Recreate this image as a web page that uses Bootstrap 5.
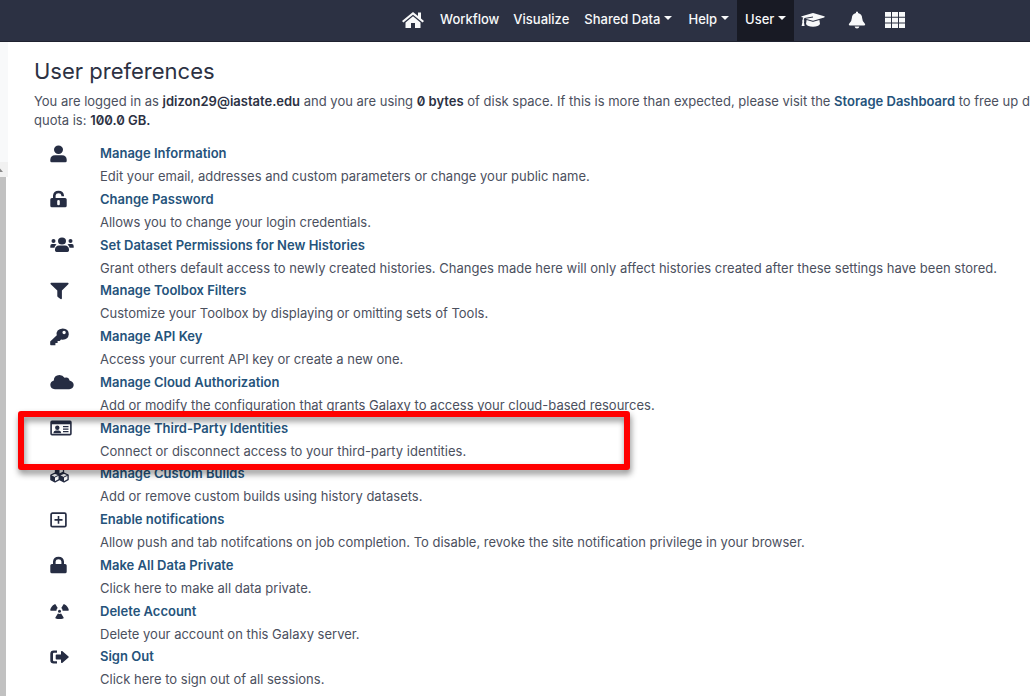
<!DOCTYPE html>
<html lang="en">
<head>
<meta charset="utf-8">
<meta name="viewport" content="width=device-width, initial-scale=1">
<title>User preferences</title>
<link href="https://cdn.jsdelivr.net/npm/bootstrap@5.3.0/dist/css/bootstrap.min.css" rel="stylesheet">
<style>
:root { --masthead: #2c3143; --ink: #2c3143; --link: #25537b; }
body { font-family: Inter, "Liberation Sans", sans-serif; font-size: 13px; line-height: 19px; color: #4b505e; }
a { color: var(--link); text-decoration: none; font-weight: 600; }
svg { display: block; flex: none; fill: currentColor; }
.masthead { background: var(--masthead); height: 42px; border-bottom: 1px solid #1f2230; padding-left: 395px; }
.masthead .nav-link { color: #f8f9fa; font-size: 13px; font-weight: 500; line-height: 19px; padding: 0 7px 2px; white-space: nowrap; }
.masthead .nav-link.active { background: #181a24; }
.masthead .dropdown-toggle::after { margin-left: 4px; border-width: 4px 4px 0; vertical-align: 4px; }
.side-strip { width: 8px; background: #f8f9fa; }
.side-space { height: 120px; }
.side-arrow { height: 15px; background: #f1f1f1; color: #8a8a8a; }
.side-thumb { width: 6px; background: #c1c1c1; }
.side-track { background: #fff; }
.prefs { padding: 16px 0 5px 26px; }
h1 { font-size: 22px; line-height: 26px; font-weight: 400; color: var(--ink); }
.quota { margin: 8px 0 12px; font-feature-settings: "zero"; }
.quota b { font-weight: 600; color: var(--ink); }
.pref-row { flex: 1 1 0; min-height: 45px; line-height: 23px; white-space: nowrap; }
.pref-icon { width: 66px; height: 23px; padding-left: 16px; color: #262d43; }
.callout-box { left: -16px; top: -6px; width: 612px; height: 59px; border: 6px solid #f00; border-radius: 3px; filter: drop-shadow(1px 4px 3px rgba(0,0,0,.45)); pointer-events: none; z-index: 1; }
</style>
</head>
<body class="bg-white d-flex flex-column min-vh-100 overflow-x-hidden">
<nav class="masthead d-flex" aria-label="Main">
  <ul class="nav flex-nowrap align-items-stretch">
    <li class="nav-item d-flex"><a class="nav-link d-flex align-items-center" href="#" aria-label="Home">
      <svg width="24" height="18" viewBox="0 0 24 18"><path d="M11 1 0 10l1.400 1.600L11 3.800l9.600 7.800L22 10l-3-2.500V1.500h-3v3.600z"/><path d="M11 5.300 3.500 11.400V17H9v-5h4v5h5.500v-5.600z"/></svg></a></li>
    <li class="nav-item d-flex"><a class="nav-link d-flex align-items-center" href="#">Workflow</a></li>
    <li class="nav-item d-flex"><a class="nav-link d-flex align-items-center" href="#">Visualize</a></li>
    <li class="nav-item d-flex"><a class="nav-link px-2 d-flex align-items-center" href="#"><span class="dropdown-toggle">Shared Data</span></a></li>
    <li class="nav-item d-flex"><a class="nav-link px-2 d-flex align-items-center" href="#"><span class="dropdown-toggle">Help</span></a></li>
    <li class="nav-item d-flex"><a class="nav-link active px-2 d-flex align-items-center" href="#" aria-current="page"><span class="dropdown-toggle">User</span></a></li>
    <li class="nav-item d-flex"><a class="nav-link d-flex align-items-center" href="#" aria-label="Tutorials">
      <svg width="24" height="16" viewBox="0 0 24 16"><path d="M11 1.200q1-.3 2 0l10.200 3q1.200.6 0 1.200L13 8.600q-1 .3-2 0L4.500 6.700l7.600-1.200-.2-.9L3.500 5.900Q2.800 6.700 2.800 8q.9.800.1 1.700L3.600 14H.6l.9-4.300Q.7 8.800 1.600 8q0-1.400.7-2.400L.8 5.200q-1-.5 0-1z"/><path d="m5.600 8 5.200 1.600q1.200.4 2.400 0L18.400 8l.6 4q-1.500 2.700-7 2.700T5 12z"/></svg></a></li>
    <li class="nav-item d-flex ms-2"><a class="nav-link d-flex align-items-center" href="#" aria-label="Notifications">
      <svg width="20" height="18" viewBox="0 0 20 18"><path d="M9 .8h2v1.300q4 .9 4.200 5.100.1 3.600 2.700 5.600.9 1.200-.5 1.600H2.600q-1.400-.4-.5-1.600 2.600-2 2.700-5.600Q5 3 9 2.100zM7.600 15.400h4.800Q12 17.500 10 17.500t-2.400-2.100"/></svg></a></li>
    <li class="nav-item d-flex ms-1"><a class="nav-link d-flex align-items-center" href="#" aria-label="Applications">
      <svg width="20" height="16" viewBox="0 0 20 16"><path d="M0 0h6v4.700H0zM7 0h6v4.700H7zM14 0h6v4.700h-6zM0 5.700h6v4.700H0zM7 5.700h6v4.700H7zM14 5.700h6v4.700h-6zM0 11.400h6V16H0zM7 11.400h6V16H7zM14 11.400h6V16h-6z"/></svg></a></li>
  </ul>
</nav>
<div class="d-flex flex-grow-1">
  <div class="side-strip d-flex flex-column flex-shrink-0" aria-hidden="true">
    <div class="side-space"></div>
    <div class="side-arrow"><svg width="6" height="14" viewBox="0 0 6 14"><path d="M0 6.500 3 10H0z"/></svg></div>
    <div class="side-track flex-grow-1 d-flex"><div class="side-thumb"></div></div>
  </div>
  <main class="prefs d-flex flex-column flex-grow-1 overflow-hidden">
    <h1 class="mb-0">User preferences</h1>
    <p class="quota text-nowrap">You are logged in as <b>jdizon29@iastate.edu</b> and you are using <b>0 bytes</b> of disk space. If this is more than expected, please visit the <a href="#">Storage Dashboard</a> to free up d<br>quota is: <b>100.0 GB.</b></p>
    <div class="pref-row d-flex"><div class="pref-icon d-flex align-items-center">
      <svg width="17" height="18" viewBox="0 0 17 18"><ellipse cx="8.500" cy="4.700" rx="4.500" ry="4.200"/><path d="M5 10.300h7q4.500.2 4.700 4.500V16q0 1.300-1.300 1.300H1.600Q.3 17.300.3 16v-1.200Q.5 10.500 5 10.300"/></svg></div>
      <div><a href="#">Manage Information</a><div>Edit your email, addresses and custom parameters or change your public name.</div></div></div>
    <div class="pref-row d-flex"><div class="pref-icon d-flex align-items-center">
      <svg width="17" height="18" viewBox="0 0 17 18"><path fill-rule="evenodd" d="M3 8V5.500Q3.400.8 8.500.8t5.500 4.700v.7h-2.600v-.7Q11.200 3.200 8.500 3.200T5.600 5.500V8h9.500q1.600.1 1.600 1.500v6.300q0 1.500-1.600 1.500H1.900q-1.600 0-1.600-1.500V9.500Q.3 8.100 1.900 8zm4.200 3.200v3q0 1.100 1.300 1.100t1.300-1.100v-3q0-1.100-1.300-1.100t-1.300 1.100"/></svg></div>
      <div><a href="#">Change Password</a><div>Allows you to change your login credentials.</div></div></div>
    <div class="pref-row d-flex"><div class="pref-icon d-flex align-items-center">
      <svg width="24" height="18" viewBox="0 0 24 18"><circle cx="3.500" cy="5" r="2"/><circle cx="20.500" cy="5" r="2"/><ellipse cx="12" cy="5" rx="4" ry="3.600"/><path d="M2 8h3q1 0 1.500.6-1.800 1.200-2.100 3.200H.3V10Q.4 8.200 2 8M22 8h-3q-1 0-1.500.6 1.800 1.200 2.100 3.200h4.100V10q-.1-1.800-1.700-2M9 9.600h6q3.800.3 4 4v1q-.1 1.400-1.500 1.400h-11Q5.100 16 5 14.600v-1q.2-3.700 4-4"/></svg></div>
      <div><a href="#">Set Dataset Permissions for New Histories</a><div>Grant others default access to newly created histories. Changes made here will only affect histories created after these settings have been stored.</div></div></div>
    <div class="pref-row d-flex"><div class="pref-icon d-flex align-items-center">
      <svg width="19" height="18" viewBox="0 0 19 18"><path d="M1.200.8h16.600q1.300.3.500 1.500l-6.400 6.200v8q-.3 1.100-1.400.6l-2.700-2q-.5-.5-.5-1V8.500L.7 2.300Q0 1.100 1.200.8"/></svg></div>
      <div><a href="#">Manage Toolbox Filters</a><div>Customize your Toolbox by displaying or omitting sets of Tools.</div></div></div>
    <div class="pref-row d-flex"><div class="pref-icon d-flex align-items-center">
      <svg width="19" height="18" viewBox="0 0 19 18"><path fill-rule="evenodd" d="M12.700.6q6 .4 6.100 5.600-.5 5.400-6.100 5.500l-1.700-.2-1.300 1.400H7.600V15H5.400v2.300H.9q-.7 0-.7-.7v-3.200l6.600-6.100Q5.600 1.300 12.700.6m1.400 2.100q-1.700.2-1.700 1.800.2 1.600 1.700 1.700 1.600-.1 1.700-1.700-.1-1.600-1.700-1.800"/></svg></div>
      <div><a href="#">Manage API Key</a><div>Access your current API key or create a new one.</div></div></div>
    <div class="pref-row d-flex"><div class="pref-icon d-flex align-items-center">
      <svg width="24" height="18" viewBox="0 0 24 18"><path d="M5 16.300Q.4 15.700.3 11.700q.2-3.200 3.500-4.200 0-5 5.700-5.400 3.300 0 5 2.600 4.300-1.300 5 2.900 4.100 1 4.200 4.500-.4 3.700-4.500 4.200z"/></svg></div>
      <div><a href="#">Manage Cloud Authorization</a><div>Add or modify the configuration that grants Galaxy to access your cloud-based resources.</div></div></div>
    <div class="pref-row d-flex position-relative"><div class="pref-icon d-flex align-items-center">
      <svg width="22" height="18" viewBox="0 0 22 18"><path fill-rule="evenodd" d="M2 1.500h18q1.700.2 1.700 1.700v11.600q0 1.500-1.700 1.700H2Q.3 16.300.3 14.800V3.200Q.3 1.700 2 1.500m-.1 3.800v9.500h18.200V5.300z"/><circle cx="7.300" cy="8.700" r="2.200"/><path d="M3.300 14.300q.2-2.700 2.500-2.800h3q2.300.1 2.500 2.800zM13 7h5.500v1.200H13zM13 9.500h5.500v1.200H13zM13 12h5.500v1.200H13z"/></svg></div>
      <div><a href="#">Manage Third-Party Identities</a><div>Connect or disconnect access to your third-party identities.</div></div>
      <div class="callout-box position-absolute"></div></div>
    <div class="pref-row d-flex"><div class="pref-icon d-flex align-items-center">
      <svg width="19" height="18" viewBox="0 0 19 18"><g stroke="#262d43" stroke-width="1.300" stroke-linejoin="round" fill="none"><path d="m9.500 1 4 1.700v4.500l-4 1.800-4-1.800V2.700zM5 8.200l4.200 1.800v4.700L5 16.800.9 14.700V10zM14 8.200l4.100 1.800v4.700L14 16.800l-4.200-2.100V10z"/></g><path d="m5.500 2.700 4 1.800v4.500l-4-1.800zM.9 10 5 12v4.800L.9 14.700zM9.800 10l4.200 2v4.800l-4.200-2.100z"/><path fill="none" stroke="#262d43" d="m5 12 4.200-2M14 12l4.100-2"/></svg></div>
      <div><a href="#">Manage Custom Builds</a><div>Add or remove custom builds using history datasets.</div></div></div>
    <div class="pref-row d-flex"><div class="pref-icon d-flex align-items-center">
      <svg width="17" height="18" viewBox="0 0 17 18"><rect x="1.100" y="2.100" width="14.800" height="13.600" rx="1.300" fill="none" stroke="currentColor" stroke-width="1.700"/><path d="M7.700 5h1.600v3.100h3.200v1.600H9.300v3.100H7.700V9.700H4.500V8.100h3.200z"/></svg></div>
      <div><a href="#">Enable notifications</a><div>Allow push and tab notifcations on job completion. To disable, revoke the site notification privilege in your browser.</div></div></div>
    <div class="pref-row d-flex"><div class="pref-icon d-flex align-items-center">
      <svg width="17" height="18" viewBox="0 0 17 18"><path fill-rule="evenodd" d="M3 8V5.500Q3.400.8 8.500.8T14 5.500V8h1.100q1.600.1 1.600 1.500v6.300q0 1.500-1.600 1.500H1.900q-1.600 0-1.600-1.500V9.500Q.3 8.100 1.900 8zm2.600 0h5.800V5.500Q11.200 3.200 8.500 3.200T5.600 5.500z"/></svg></div>
      <div><a href="#">Make All Data Private</a><div>Click here to make all data private.</div></div></div>
    <div class="pref-row d-flex"><div class="pref-icon d-flex align-items-center">
      <svg width="19" height="18" viewBox="0 0 19 18"><circle cx="9.500" cy="9.200" r="1.500"/><path d="M4.700 2.200q.5-.3.900.2l2.100 3.700Q6.500 7 6.400 8.700H.9q-.7-.1-.7-.8.700-3.700 4.500-5.700M14.300 2.200q-.5-.3-.9.200l-2.100 3.700q1.200.9 1.300 2.600h5.500q.7-.1.700-.8-.7-3.700-4.500-5.700M7.900 11.600q1.600.8 3.200 0l2.500 4q.2.500-.3.800-3.800 1.400-7.600 0-.5-.3-.3-.8z"/></svg></div>
      <div><a href="#">Delete Account</a><div>Delete your account on this Galaxy server.</div></div></div>
    <div class="pref-row d-flex"><div class="pref-icon d-flex align-items-center">
      <svg width="19" height="18" viewBox="0 0 19 18"><path d="M7 2.500v2.300H4q-1 0-1 1v6.400q0 1 1 1h3v2.300H3.700Q.3 15.400.3 12.200V5.800q0-3.200 3.400-3.300z"/><path d="M11 3.700q.1-1.200 1.200-.6l6.300 5.300q.6.600 0 1.200l-6.300 5.300q-1.100.6-1.200-.6v-2.700H6.500q-.8-.1-.8-.8V7.200q0-.7.800-.8H11z"/></svg></div>
      <div><a href="#">Sign Out</a><div>Click here to sign out of all sessions.</div></div></div>
  </main>
</div>
<script src="https://cdn.jsdelivr.net/npm/bootstrap@5.3.0/dist/js/bootstrap.bundle.min.js"></script>
</body>
</html>
